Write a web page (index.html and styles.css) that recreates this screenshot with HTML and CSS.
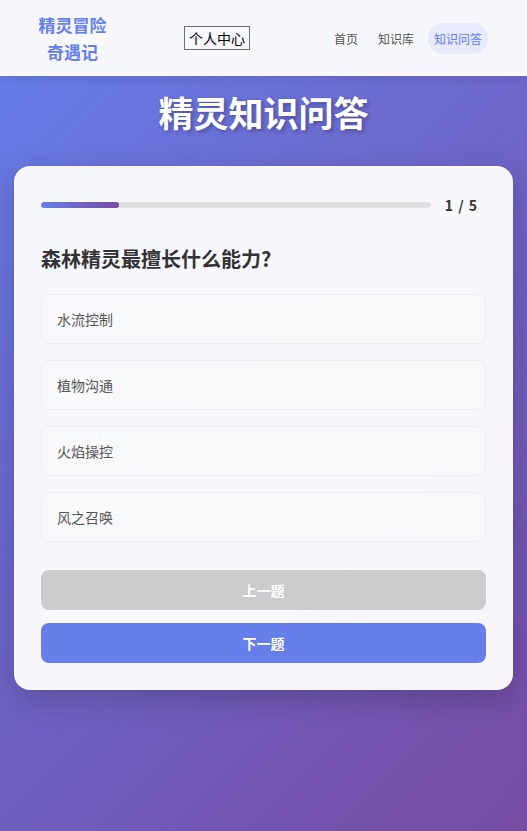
FILE: index.html
```html
<!DOCTYPE html>
<html lang="zh-CN">

<head>
    <meta charset="UTF-8">
    <title>精灵知识问答</title>
    <link rel="stylesheet" href="styles.css">
</head>

<body>
    <header class="cabecalho">
        <div class="logo">精灵冒险奇遇记</div>
        <button class="perfil">个人中心</button>
        <nav class="menu">
            <a href="#">首页</a>
            <a href="#">知识库</a>
            <a href="#" class="ativo">知识问答</a>
        </nav>
    </header>

    <main class="conteudo">
        <h1 class="titulo">精灵知识问答</h1>

        <div class="cartao">
            <div class="progresso">
                <div class="barra">
                    <div class="preenchido"></div>
                </div>
                <span class="contador">1 / 5</span>
            </div>

            <h2 class="pergunta">森林精灵最擅长什么能力?</h2>

            <div class="opcoes">
                <div class="opcao">水流控制</div>
                <div class="opcao">植物沟通</div>
                <div class="opcao">火焰操控</div>
                <div class="opcao">风之召唤</div>
            </div>

            <div class="botoes">
                <button class="btn anterior" disabled>上一题</button>
                <button class="btn proximo">下一题</button>
            </div>
        </div>
    </main>
</body>

</html>
```

FILE: styles.css
```css
* {
    box-sizing: border-box;
    font-family: "Noto Sans CJK SC", "Noto Sans", sans-serif;
}

body {
    margin: 0;
    min-height: 831px;
    background: linear-gradient(135deg, #667eea 0%, #764ba2 100%);
}

.cabecalho {
    display: flex;
    align-items: center;
    height: 76px;
    padding: 0 39px 0 36px;
    background-color: rgba(255, 255, 255, 0.95);
    box-shadow: 0 2px 10px rgba(0, 0, 0, 0.1);
}

.logo {
    width: 73px;
    color: #667eea;
    font-size: 17px;
    font-weight: bold;
    line-height: 27px;
    text-align: center;
}

.perfil {
    height: 24px;
    padding: 0 4px;
    margin-left: 75px;
    background: transparent;
    border: 1.5px solid #707070;
    color: #000;
    font-size: 14px;
    line-height: 18px;
}

.menu {
    display: flex;
    align-items: center;
    gap: 8px;
    margin-left: auto;
}

.menu a {
    padding: 6px 6px;
    color: #555;
    font-size: 12px;
    text-decoration: none;
    border-radius: 20px;
}

.menu a.ativo {
    padding: 7px 6px;
    background-color: #e6eafb;
    color: #667eea;
}

.conteudo {
    padding: 0 14px 40px 14px;
}

.titulo {
    margin: 15px 0 33px 0;
    color: white;
    font-size: 35px;
    line-height: 42px;
    text-align: center;
    text-shadow: 2px 2px 4px rgba(0, 0, 0, 0.3);
}

.cartao {
    padding: 27px;
    background-color: rgba(255, 255, 255, 0.95);
    border-radius: 16px;
    box-shadow: 0 10px 30px rgba(0, 0, 0, 0.2);
}

.progresso {
    display: flex;
    align-items: center;
    gap: 14px;
    height: 24px;
    padding-right: 9px;
}

.barra {
    flex: 1;
    height: 6px;
    background-color: #e0e0e0;
    border-radius: 3px;
    overflow: hidden;
}

.preenchido {
    width: 20%;
    height: 100%;
    background: linear-gradient(90deg, #667eea, #764ba2);
    border-radius: 3px;
}

.contador {
    color: #333;
    font-size: 14px;
    font-weight: bold;
    word-spacing: 2px;
}

.pergunta {
    margin: 28px 0 21px 0;
    color: #333;
    font-size: 20px;
    line-height: 28px;
}

.opcoes {
    display: flex;
    flex-direction: column;
    gap: 16px;
}

.opcao {
    height: 50px;
    padding: 0 15px;
    display: flex;
    align-items: center;
    background-color: #f8f9fa;
    border: 1px solid #eceef2;
    border-radius: 8px;
    color: #555;
    font-size: 14px;
}

.botoes {
    display: flex;
    flex-direction: column;
    gap: 13px;
    margin-top: 28px;
}

.btn {
    height: 40px;
    border: none;
    border-radius: 8px;
    color: white;
    font-size: 14px;
    font-weight: bold;
    cursor: pointer;
}

.anterior {
    background-color: #cccccc;
}

.proximo {
    background-color: #667eea;
}
```
